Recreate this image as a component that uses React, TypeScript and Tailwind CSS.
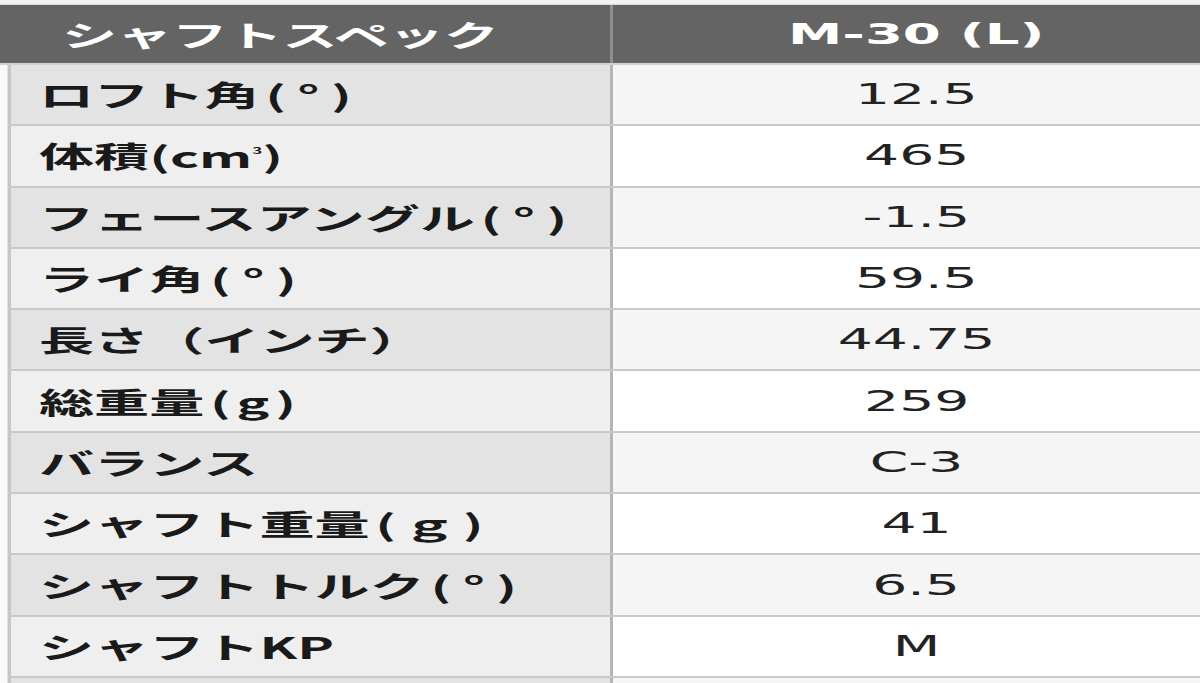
function P({ children }: { children: React.ReactNode }) {
  return <span className="px-[3px]">{children}</span>;
}

const deg = (
  <>
    <P>(</P>
    <P>°</P>
    <P>)</P>
  </>
);

const rows: { label: React.ReactNode; value: string }[] = [
  { label: <>ロフト角{deg}</>, value: "12.5" },
  {
    label: (
      <>
        体積(cm<sup className="text-[9px] align-[10px]">3</sup>)
      </>
    ),
    value: "465",
  },
  { label: <>フェースアングル{deg}</>, value: "-1.5" },
  { label: <>ライ角{deg}</>, value: "59.5" },
  { label: "長さ（インチ）", value: "44.75" },
  {
    label: (
      <>
        総重量<P>(</P>g<P>)</P>
      </>
    ),
    value: "259",
  },
  { label: "バランス", value: "C-3" },
  {
    label: (
      <>
        シャフト重量<P>(</P>ｇ<P>)</P>
      </>
    ),
    value: "41",
  },
  { label: <>シャフトトルク{deg}</>, value: "6.5" },
  { label: "シャフトKP", value: "M" },
  { label: "", value: "" },
];

const jp = "font-['Noto_Sans_CJK_JP',sans-serif]";
const num = "font-['DejaVu_Sans','Noto_Sans_CJK_JP',sans-serif]";

export default function App() {
  return (
    <div className="h-[683px] w-[1200px] overflow-hidden bg-[#fafafa]">
      <div className="h-[5px] border-b border-[#dadada] bg-[#f3f3f3]" />

      {/* header */}
      <div className="flex h-[58px] bg-[#646464] text-white">
        <div className="flex w-[610px] items-center pl-[62px]">
          <span className={`inline-block origin-left scale-x-[1.9] text-[29px] font-bold leading-none ${jp}`}>
            シャフトスペック
          </span>
        </div>
        <div className="w-[3px] bg-[#8e8e8e]" />
        <div className="flex flex-1 items-center justify-center pl-[20px]">
          <span className={`inline-block scale-x-[1.88] text-[29px] font-bold leading-none ${num}`}>
            M-30 (L)
          </span>
        </div>
      </div>
      <div className="h-[2px] bg-[#d2d2d2]" />

      {/* body */}
      <div className="pl-[7px]">
        <div className="border-l border-[#e2e2e2]">
          {rows.map((r, i) => {
            const odd = i % 2 === 0;
            return (
              <div
                key={i}
                className="flex h-[61.3px] border-b-2 border-[#c9c9c9]"
              >
                <div
                  className={`flex w-[602px] items-center border-l-[3px] border-[#c6c6c6] pl-[28px] text-[#1a1a1a] ${
                    odd ? "bg-[#e3e3e3]" : "bg-[#efefef]"
                  }`}
                >
                  <span className={`inline-block origin-left scale-x-[1.9] whitespace-nowrap text-[29px] font-bold leading-none ${jp}`}>
                    {r.label}
                  </span>
                </div>
                <div className="w-[3px] bg-[#b5b5b5]" />
                <div
                  className={`flex flex-1 items-center justify-center pl-[20px] text-[#222] ${
                    odd ? "bg-[#f5f5f5]" : "bg-white"
                  }`}
                >
                  <span className={`inline-block scale-x-[1.9] text-[29px] leading-none ${num}`}>
                    {r.value}
                  </span>
                </div>
              </div>
            );
          })}
        </div>
      </div>
    </div>
  );
}
